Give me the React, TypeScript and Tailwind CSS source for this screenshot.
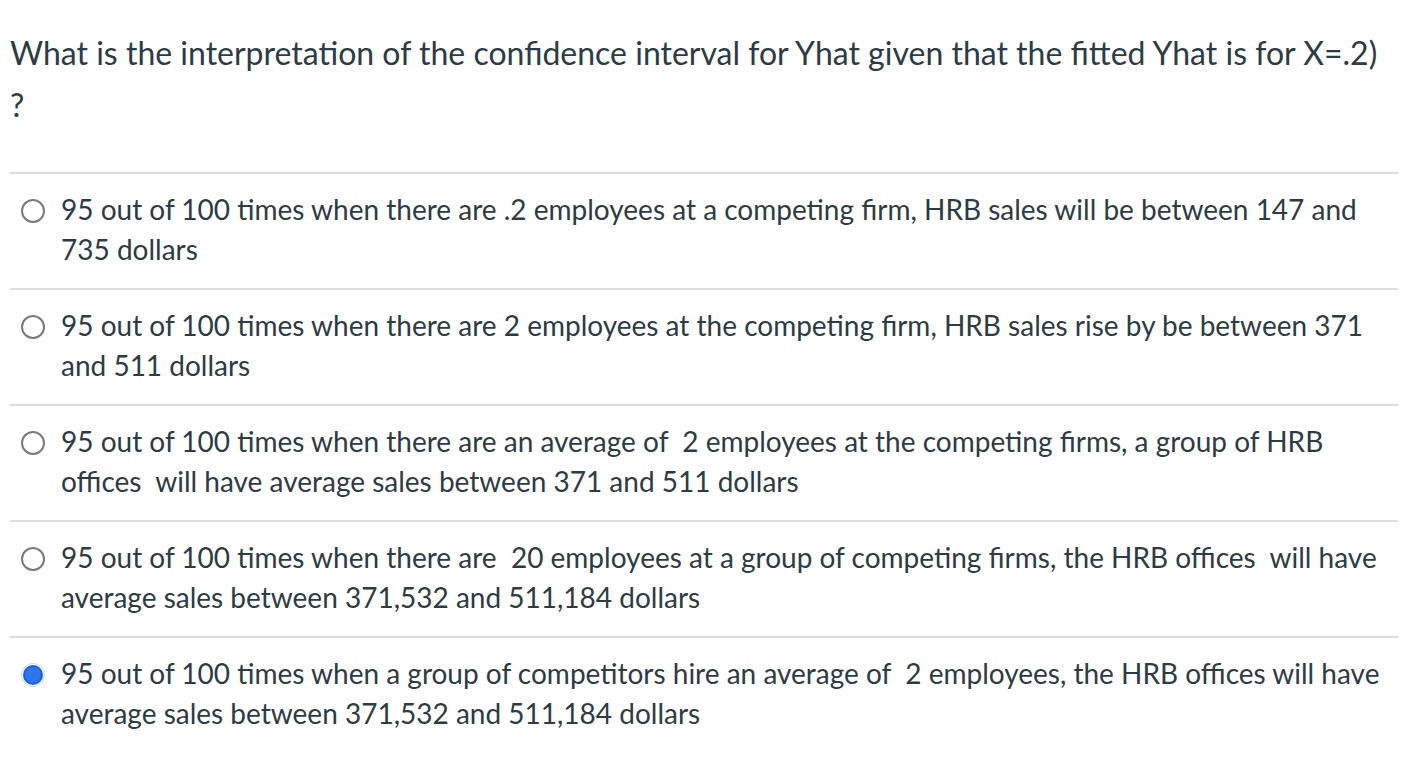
import React from "react";

const options = [
  {
    text: "95 out of 100 times when there are .2 employees at a competing firm, HRB sales will be between 147 and 735 dollars",
    checked: false,
  },
  {
    text: "95 out of 100 times when there are 2 employees at the competing firm, HRB sales rise by be between 371 and 511 dollars",
    checked: false,
  },
  {
    text: "95 out of 100 times when there are an average of \u00a02 employees at the competing firms, a group of HRB offices \u00a0will have average sales between 371 and 511 dollars",
    checked: false,
  },
  {
    text: "95 out of 100 times when there are \u00a020 employees at a group of competing firms, the HRB offices \u00a0will have average sales between 371,532 and 511,184 dollars",
    checked: false,
  },
  {
    text: "95 out of 100 times when a group of competitors hire an average of \u00a02 employees, the HRB offices will have average sales between 371,532 and 511,184 dollars",
    checked: true,
  },
];

export default function App() {
  return (
    <div
      className="min-h-[778px] bg-white pl-[10px] pr-[26px] pt-[27px] text-[#2d3b45]"
      style={{ fontFamily: "Lato, 'Open Sans', sans-serif" }}
    >
      <p className="text-[32px] leading-[52px]">
        What is the interpretation of the confidence interval for Yhat given that the fitted Yhat is for X=.2) ?
      </p>
      <div className="mt-[41px]">
        {options.map((o, i) => (
          <div key={i} className="flex border-t-2 border-[#dcdcdc] pt-[15px] pb-[19px]">
            <div className="w-[51px] shrink-0 pl-[11px] pt-[10px]">
              {o.checked ? (
                <div className="h-[24px] w-[24px] rounded-full border border-[#c4d6f7] p-[1px]">
                  <div className="h-full w-full rounded-full border-2 border-[#1d5fd8] bg-[#2f74ec]" />
                </div>
              ) : (
                <div className="h-[24px] w-[24px] rounded-full border-2 border-[#7a7a7a] bg-white" />
              )}
            </div>
            <div className="text-[28px] leading-[40px]">{o.text}</div>
          </div>
        ))}
      </div>
    </div>
  );
}
